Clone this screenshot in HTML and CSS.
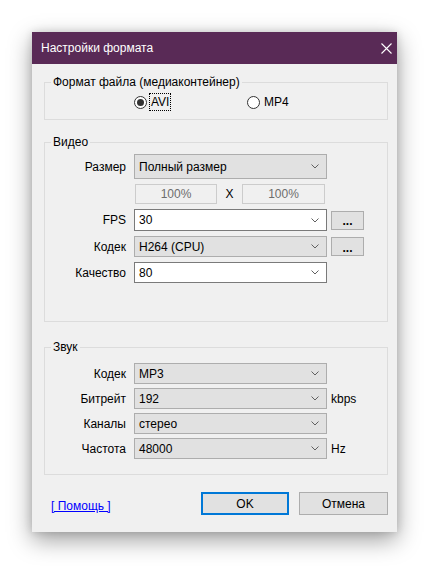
FILE: index.html
```html
<!DOCTYPE html>
<html lang="ru">
<head>
<meta charset="utf-8">
<title>Настройки формата</title>
<link rel="stylesheet" href="styles.css">
</head>
<body>
<div class="dialog">
  <div class="titlebar">
    <span class="title">Настройки формата</span>
    <svg class="close" width="11" height="11" viewBox="0 0 11 11"><path d="M0.5 0.5L10.5 10.5M10.5 0.5L0.5 10.5" stroke="#ffffff" stroke-width="1.1" fill="none"/></svg>
  </div>
  <div class="content">
    <fieldset class="group g-format">
      <legend>Формат файла (медиаконтейнер)</legend>
      <div class="radios">
        <div class="radio r-avi"><span class="circle checked"></span><span class="rlabel focus">AVI</span></div>
        <div class="radio"><span class="circle"></span><span class="rlabel">MP4</span></div>
      </div>
    </fieldset>

    <fieldset class="group g-video">
      <legend>Видео</legend>
      <div class="form">
        <span class="lbl">Размер</span>
        <div class="combo tall"><span class="val">Полный размер</span><svg class="chev" width="8" height="5" viewBox="0 0 8 5"><path d="M0.5 0.5L4 4L7.5 0.5" stroke="#606060" fill="none"/></svg></div>
        <span></span>

        <span></span>
        <div class="pct"><span class="pbox">100%</span><span class="x">X</span><span class="pbox">100%</span></div>
        <span></span>

        <span class="lbl">FPS</span>
        <div class="combo edit r22"><span class="val">30</span><svg class="chev" width="8" height="5" viewBox="0 0 8 5"><path d="M0.5 0.5L4 4L7.5 0.5" stroke="#606060" fill="none"/></svg></div>
        <div class="btn-more">...</div>

        <span class="lbl">Кодек</span>
        <div class="combo"><span class="val">H264 (CPU)</span><svg class="chev" width="8" height="5" viewBox="0 0 8 5"><path d="M0.5 0.5L4 4L7.5 0.5" stroke="#606060" fill="none"/></svg></div>
        <div class="btn-more">...</div>

        <span class="lbl">Качество</span>
        <div class="combo edit"><span class="val">80</span><svg class="chev" width="8" height="5" viewBox="0 0 8 5"><path d="M0.5 0.5L4 4L7.5 0.5" stroke="#606060" fill="none"/></svg></div>
        <span></span>
      </div>
    </fieldset>

    <fieldset class="group g-audio">
      <legend>Звук</legend>
      <div class="form audio">
        <span class="lbl">Кодек</span>
        <div class="combo"><span class="val">MP3</span><svg class="chev" width="8" height="5" viewBox="0 0 8 5"><path d="M0.5 0.5L4 4L7.5 0.5" stroke="#606060" fill="none"/></svg></div>
        <span></span>

        <span class="lbl">Битрейт</span>
        <div class="combo"><span class="val">192</span><svg class="chev" width="8" height="5" viewBox="0 0 8 5"><path d="M0.5 0.5L4 4L7.5 0.5" stroke="#606060" fill="none"/></svg></div>
        <span class="unit">kbps</span>

        <span class="lbl">Каналы</span>
        <div class="combo"><span class="val">стерео</span><svg class="chev" width="8" height="5" viewBox="0 0 8 5"><path d="M0.5 0.5L4 4L7.5 0.5" stroke="#606060" fill="none"/></svg></div>
        <span></span>

        <span class="lbl">Частота</span>
        <div class="combo"><span class="val">48000</span><svg class="chev" width="8" height="5" viewBox="0 0 8 5"><path d="M0.5 0.5L4 4L7.5 0.5" stroke="#606060" fill="none"/></svg></div>
        <span class="unit">Hz</span>
      </div>
    </fieldset>

    <div class="footer">
      <a class="help" href="#">[ Помощь ]</a>
      <div class="buttons">
        <div class="btn default">OK</div>
        <div class="btn">Отмена</div>
      </div>
    </div>
  </div>
</div>
</body>
</html>
```

FILE: styles.css
```css
* { box-sizing: border-box; }

html, body {
  margin: 0;
  background: #ffffff;
}

body {
  font-family: "Liberation Sans", Arial, sans-serif;
  font-size: 12px;
  color: #000000;
  padding: 32px 0 0 32px;
  height: 566px;
  overflow: hidden;
}

.dialog {
  width: 365px;
  background: #f0f0f0;
  box-shadow: 0 8px 22px rgba(0, 0, 0, 0.38), 0 0 8px rgba(0, 0, 0, 0.14);
}

.titlebar {
  height: 32px;
  background: #592a56;
  color: #ffffff;
  display: flex;
  align-items: center;
  padding-left: 9px;
}

.title {
  flex: 1;
  font-size: 12px;
}

.close {
  margin-right: 5px;
  display: block;
}

.content {
  padding: 10px 9px 17px 12px;
}

.group {
  margin: 0;
  padding: 0;
  min-width: 0;
  border: 1px solid #dcdcdc;
}

.group legend {
  margin-left: 6px;
  padding: 0 2px;
  line-height: 16px;
  height: 16px;
}

.g-format {
  padding: 3px 0 8px 0;
}

.radios {
  display: flex;
  align-items: center;
  height: 18px;
  padding-left: 89px;
}

.radio {
  display: flex;
  align-items: center;
}

.r-avi {
  width: 113px;
}

.circle {
  width: 13px;
  height: 13px;
  border: 1px solid #333333;
  border-radius: 50%;
  background: #ffffff;
  display: flex;
  align-items: center;
  justify-content: center;
  margin-right: 2px;
}

.circle.checked::after {
  content: "";
  width: 7px;
  height: 7px;
  border-radius: 50%;
  background: #333333;
}

.rlabel {
  padding: 1px 1px;
  border: 1px solid transparent;
  line-height: 14px;
}

.rlabel.focus {
  border: 1px dotted #000000;
}

.g-video {
  margin-top: 14px;
  padding: 4px 0 38px 0;
}

.g-audio {
  margin-top: 17px;
  padding: 8px 0 15px 0;
}

.form {
  display: grid;
  grid-template-columns: 89px 193px auto;
  row-gap: 5px;
  align-items: center;
}

.form.audio {
  row-gap: 4px;
}

.lbl {
  text-align: right;
  padding-right: 8px;
}

.combo {
  height: 21px;
  border: 1px solid #adadad;
  background: #e1e1e1;
  display: flex;
  align-items: center;
  padding: 0 7px 0 4px;
}

.combo.tall {
  height: 25px;
}

.combo.r22 {
  height: 22px;
}

.combo.edit {
  background: #ffffff;
  border-color: #7a7a7a;
}

.combo .val {
  flex: 1;
}

.chev {
  display: block;
}

.pct {
  display: flex;
  align-items: center;
  height: 20px;
  padding-left: 1px;
}

.pbox {
  width: 82px;
  height: 20px;
  border: 1px solid #cccccc;
  background: #f0f0f0;
  color: #6d6d6d;
  display: flex;
  align-items: center;
  justify-content: center;
}

.pbox + .x + .pbox {
  width: 83px;
}

.x {
  width: 25px;
  text-align: center;
}

.btn-more {
  margin-left: 4px;
  width: 33px;
  height: 19px;
  border: 1px solid #adadad;
  background: #e1e1e1;
  display: flex;
  align-items: center;
  justify-content: center;
  font-weight: bold;
  line-height: 1;
  padding-top: 2px;
}

.unit {
  margin-left: 4px;
}

.footer {
  margin-top: 17px;
  display: flex;
  align-items: center;
}

.help {
  margin-left: 7px;
  margin-top: 5px;
  color: #0000ff;
  text-decoration: underline;
}

.buttons {
  margin-left: auto;
  display: flex;
  gap: 10px;
}

.btn {
  width: 89px;
  height: 23px;
  border: 1px solid #adadad;
  background: #e1e1e1;
  display: flex;
  align-items: center;
  justify-content: center;
}

.btn.default {
  width: 88px;
  border: 2px solid #0078d7;
}
```
